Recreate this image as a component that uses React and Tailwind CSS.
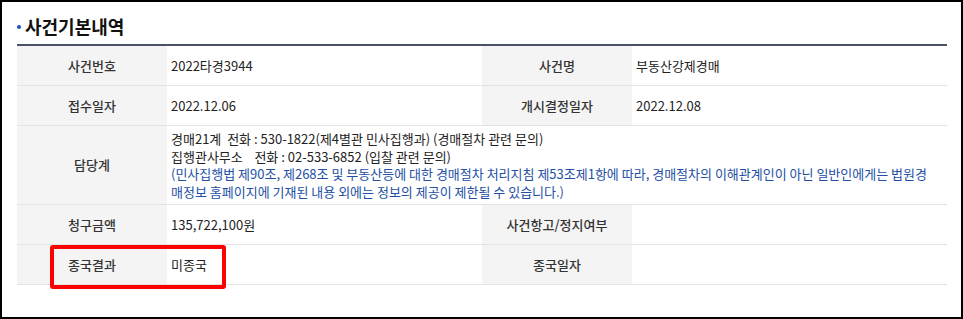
import React from 'react';

const Label = ({ children, tall }) => (
  <div
    className={`flex items-center justify-center bg-[#f4f4f4] border-b border-[#e3e3e3] font-medium text-[#333] ${tall ? 'h-[79px]' : 'h-[40px]'}`}
  >
    {children}
  </div>
);

const Value = ({ children }) => (
  <div className="flex items-center pl-[4px] h-[40px] border-b border-[#e3e3e3] text-[#222]">
    {children}
  </div>
);

export default function App() {
  return (
    <div
      className="relative w-[963px] h-[319px] border-2 border-black bg-white"
      style={{ fontFamily: '"Noto Sans CJK KR", "Noto Sans", sans-serif' }}
    >
      <div className="pl-[15px] pr-[14px]">
        <div className="flex items-center h-[42px] pt-[6px]">
          <span className="w-[4px] h-[4px] rounded-full bg-[#1f4fc8] mr-[4px] mt-[2px]" />
          <h2 className="text-[18px] font-bold text-[#111]">사건기본내역</h2>
        </div>

        <div className="grid grid-cols-[150px_315px_150px_315px] border-t-2 border-[#4b5262] text-[13px] leading-[17.5px]">
          <Label>사건번호</Label>
          <Value>2022타경3944</Value>
          <Label>사건명</Label>
          <Value>부동산강제경매</Value>

          <Label>접수일자</Label>
          <Value>2022.12.06</Value>
          <Label>개시결정일자</Label>
          <Value>2022.12.08</Value>

          <Label tall>담당계</Label>
          <div className="col-span-3 h-[79px] flex flex-col justify-center pl-[4px] border-b border-[#e3e3e3] text-[#222] whitespace-nowrap">
            <p>경매21계&nbsp;&nbsp;전화 : 530-1822(제4별관 민사집행과) (경매절차 관련 문의)</p>
            <p>집행관사무소&nbsp;&nbsp;&nbsp;&nbsp;전화 : 02-533-6852 (입찰 관련 문의)</p>
            <p className="text-[#2350a5]">
              (민사집행법 제90조, 제268조 및 부동산등에 대한 경매절차 처리지침 제53조제1항에 따라, 경매절차의 이해관계인이 아닌 일반인에게는 법원경
            </p>
            <p className="text-[#2350a5]">매정보 홈페이지에 기재된 내용 외에는 정보의 제공이 제한될 수 있습니다.)</p>
          </div>

          <Label>청구금액</Label>
          <Value>135,722,100원</Value>
          <Label>사건항고/정지여부</Label>
          <Value />

          <Label>종국결과</Label>
          <Value>미종국</Value>
          <Label>종국일자</Label>
          <Value />
        </div>
      </div>

      <div className="absolute left-[48px] top-[243px] w-[176px] h-[44px] border-[4px] border-[#ff0000] rounded-[3px]" />
    </div>
  );
}
